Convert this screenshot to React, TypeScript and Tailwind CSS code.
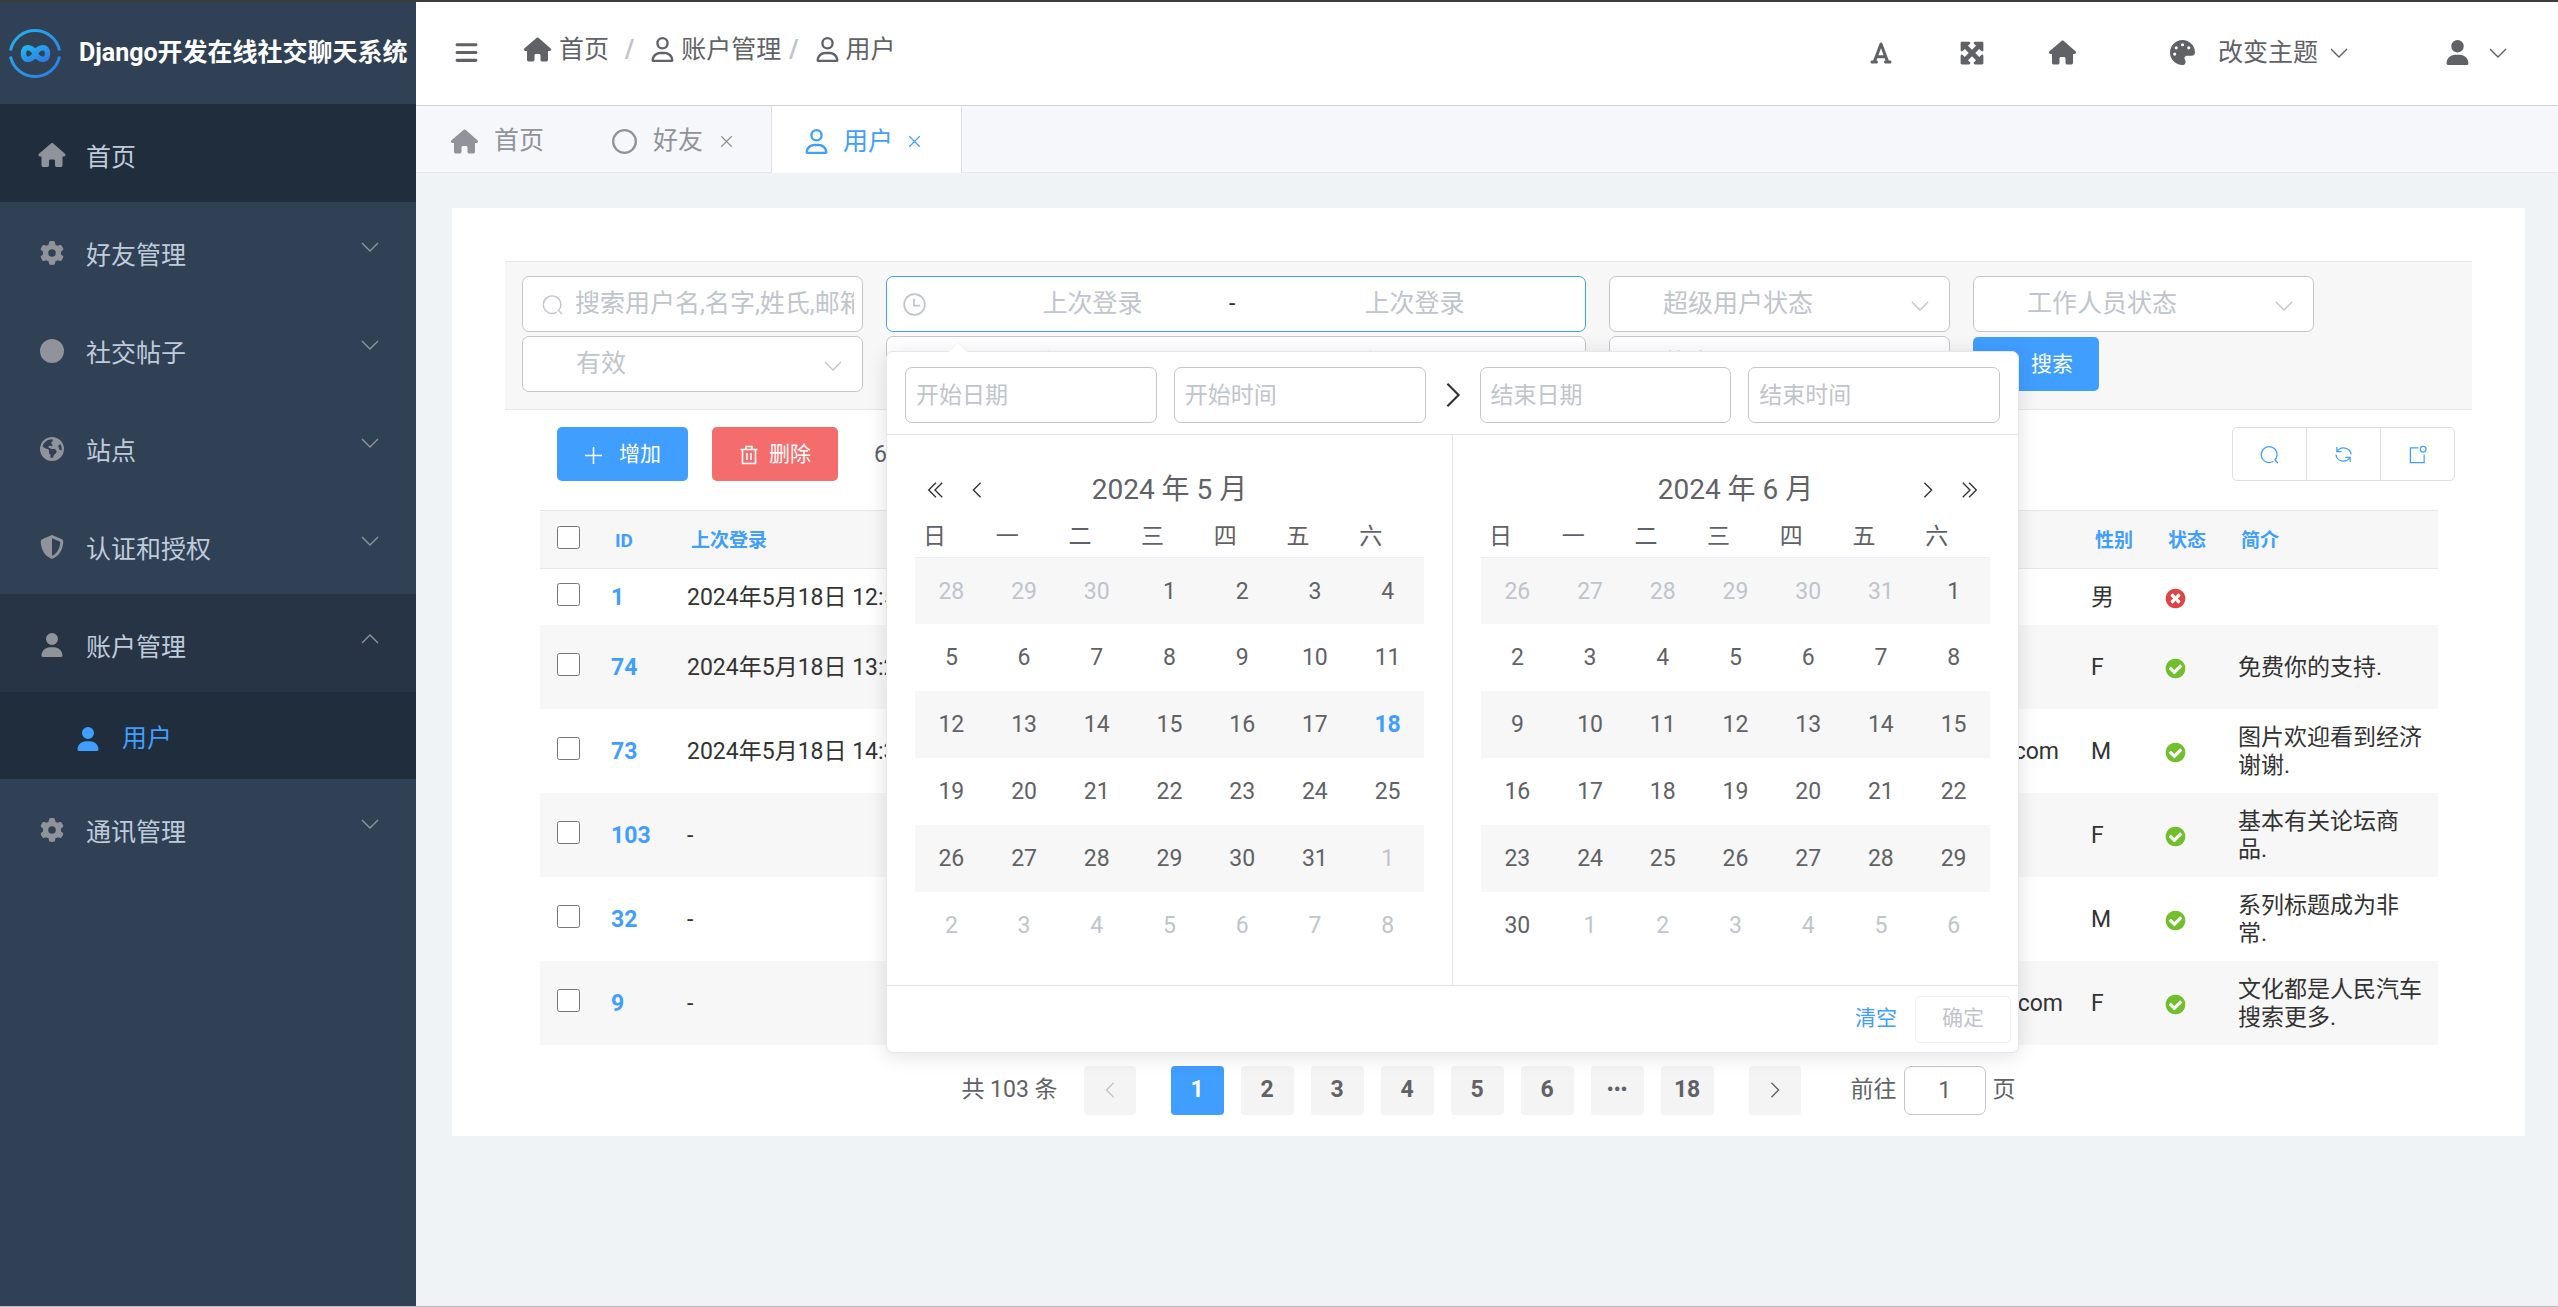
import React, { useState } from "react";
import { clsx } from "clsx";
import {
  FaBars,
  FaCircle,
  FaEarthAmericas,
  FaFont,
  FaGear,
  FaHouse,
  FaMaximize,
  FaPalette,
  FaRegCircle,
  FaRegUser,
  FaShieldHalved,
  FaUser,
} from "react-icons/fa6";

type IconProps = { className?: string };

const LineIcon: React.FC<IconProps & { d: string; box?: string; width?: number }> = ({ d, className, box = "0 0 20 20", width = 1 }) => (
  <svg viewBox={box} fill="none" stroke="currentColor" strokeWidth={width} className={clsx("shrink-0", className)} aria-hidden="true">
    <path d={d} />
  </svg>
);

const ArrowDown = ({ className }: IconProps) => <LineIcon d="M2 6l8 8 8-8" width={1.4} className={className} />;
const ArrowUp = ({ className }: IconProps) => <LineIcon d="M2 14l8-8 8 8" width={1.4} className={className} />;
const ArrowLeft = ({ className }: IconProps) => <LineIcon d="M14 2l-8 8 8 8" width={1.5} className={className} />;
const ArrowRight = ({ className }: IconProps) => <LineIcon d="M6 2l8 8-8 8" width={1.5} className={className} />;
const DoubleLeft = ({ className }: IconProps) => <LineIcon d="M11 2l-8 8 8 8M18 2l-8 8 8 8" width={1.5} className={className} />;
const DoubleRight = ({ className }: IconProps) => <LineIcon d="M2 2l8 8-8 8M9 2l8 8-8 8" width={1.5} className={className} />;
const CloseIcon = ({ className }: IconProps) => <LineIcon d="M3 3l14 14M17 3L3 17" width={1.6} className={className} />;
const PlusIcon = ({ className }: IconProps) => <LineIcon d="M10 1v18M1 10h18" width={1.6} className={className} />;
const SearchIcon = ({ className }: IconProps) => (
  <LineIcon d="M15.5 16a8.3 8.3 0 1 0-1.5 1.2M15.2 15.3L19 19" width={1.3} className={className} />
);
const ClockIcon = ({ className }: IconProps) => <LineIcon d="M10 1a9 9 0 1 0 0 18a9 9 0 0 0 0-18M9.5 5v6h5.5" width={1.5} className={className} />;
const TrashIcon = ({ className }: IconProps) => (
  <LineIcon d="M1.5 4.5h17M7 4.5v-3h6v3M3.5 4.5v14h13v-14M8 8v7M12 8v7" width={1.6} className={className} />
);
const RefreshIcon = ({ className }: IconProps) => (
  <LineIcon d="M3 2v5h5M3.3 6.8A8 8 0 0 1 18 10M17 18v-5h-5M16.700 13.200A8 8 0 0 1 2 10" width={1.3} className={className} />
);
const ExportIcon = ({ className }: IconProps) => (
  <LineIcon d="M11 3H2.500v15.500H17V10M16 1.500a3 3 0 1 0 0 6a3 3 0 0 0 0-6" width={1.3} className={className} />
);

const Logo = () => (
  <svg viewBox="0 0 54 54" className="size-[54px] shrink-0" fill="none" stroke="url(#logoBlue)" aria-hidden="true">
    <defs>
      <linearGradient id="logoBlue" x1="0" y1="0" x2="1" y2="1">
        <stop offset="0" stopColor="#20b4f0" />
        <stop offset="1" stopColor="#2e7be4" />
      </linearGradient>
    </defs>
    <path d="M2.500 24.500A25 25 0 0 1 51.500 24.500M2.500 30.500A25 25 0 0 0 51.500 30.500" strokeWidth="3" />
    <path
      d="M27.300 27.500C24 20.500 15.500 19 15.500 27.500C15.500 36 24 34.500 27.300 27.500C30.500 20.500 39.500 19 39.500 27.500C39.500 36 31 34.500 27.300 27.500Z"
      strokeWidth="5.500"
    />
  </svg>
);

const StatusIcon = ({ ok }: { ok: boolean }) => (
  <svg viewBox="0 0 1792 1792" className="size-[23px]" role="img" aria-label={ok ? "True" : "False"}>
    <path
      fill={ok ? "#70bf2b" : "#dd4646"}
      d={
        ok
          ? "M1412 734q0-28-18-46l-91-90q-19-19-45-19t-45 19l-408 407-226-226q-19-19-45-19t-45 19l-91 90q-18 18-18 46 0 27 18 45l362 362q19 19 45 19 27 0 46-19l543-543q18-18 18-45zm252 162q0 209-103 385.5t-279.5 279.5-385.5 103-385.5-103-279.5-279.5-103-385.5 103-385.5 279.5-279.5 385.5-103 385.5 103 279.5 279.5 103 385.5z"
          : "M1277 1122q0-26-19-45l-181-181 181-181q19-19 19-45 0-27-19-46l-90-90q-19-19-46-19-26 0-45 19l-181 181-181-181q-19-19-45-19-27 0-46 19l-90 90q-19 19-19 46 0 26 19 45l181 181-181 181q-19 19-19 45 0 27 19 46l90 90q19 19 46 19 26 0 45-19l181-181 181 181q19 19 45 19 27 0 46-19l90-90q19-19 19-46zm387-226q0 209-103 385.5t-279.5 279.5-385.5 103-385.5-103-279.5-279.5-103-385.5 103-385.5 279.5-279.5 385.5-103 385.5 103 279.5 279.5 103 385.5z"
      }
    />
  </svg>
);

const menus = [
  { name: "首页", icon: FaHouse, active: true },
  { name: "好友管理", icon: FaGear, arrow: true },
  { name: "社交帖子", icon: FaCircle, arrow: true },
  { name: "站点", icon: FaEarthAmericas, arrow: true },
  { name: "认证和授权", icon: FaShieldHalved, arrow: true },
  { name: "账户管理", icon: FaUser, arrow: true, open: true, children: ["用户"] },
  { name: "通讯管理", icon: FaGear, arrow: true },
];

const Sidebar = () => (
  <aside className="w-[416px] shrink-0 bg-[#304156]">
    <div className="flex h-[102px] items-center gap-[17px] pl-2 text-[25px] font-bold whitespace-nowrap text-white">
      <Logo />
      Django开发在线社交聊天系统
    </div>
    <nav>
      {menus.map((item) => (
        <div key={item.name}>
          <button
            className={clsx(
              "flex h-[98px] w-full items-center px-9 pt-1 text-left text-[25px] text-[#bfcbd9]",
              item.active && "bg-[#1f2d3d]",
              item.open && "bg-[#263445]"
            )}
          >
            <item.icon className="mr-[18px] w-8 text-[24px] text-[#909399]" />
            <span className="flex-1 pt-1.5">{item.name}</span>
            {item.arrow && (item.open ? <ArrowUp className="mb-3 size-5 text-[#909399]" /> : <ArrowDown className="mb-3 size-5 text-[#909399]" />)}
          </button>
          {item.children?.map((child) => (
            <button key={child} className="flex h-[87px] w-full items-center gap-[22px] bg-[#1f2d3d] px-[76px] pt-1.5 text-[25px] text-[#409eff]">
              <FaUser className="text-[24px]" />
              {child}
            </button>
          ))}
        </div>
      ))}
    </nav>
  </aside>
);

const Header = () => (
  <header className="flex h-[104px] items-center border-b border-[#ced4da] bg-white pr-[50px] pb-0.5 pl-[38px] text-[25px] text-[#606266]">
    <button aria-label="菜单">
      <FaBars className="text-[25px]" />
    </button>
    <nav className="mb-1.5 ml-[45px] flex items-center gap-2">
      <a href="#" className="flex items-center gap-2">
        <FaHouse className="text-[27px]" />
        首页
      </a>
      <span className="px-2 font-bold text-[#c0c4cc]">/</span>
      <a href="#" className="flex items-center gap-1.5">
        <FaRegUser className="text-[25px]" />
        账户管理
      </a>
      <span className="font-bold text-[#c0c4cc]">/</span>
      <a href="#" className="ml-2 flex items-center gap-1.5">
        <FaRegUser className="text-[25px]" />
        用户
      </a>
    </nav>
    <div className="ml-auto flex items-center">
      <button aria-label="字体" className="mr-[66px]">
        <FaFont className="text-[24px]" />
      </button>
      <button aria-label="全屏" className="mr-[64px]">
        <FaMaximize className="text-[26px]" />
      </button>
      <button aria-label="首页" className="mr-[94px]">
        <FaHouse className="text-[27px]" />
      </button>
      <button className="mr-[96px] flex items-center">
        <FaPalette className="mr-[23px] text-[25px]" />
        改变主题
        <ArrowDown className="ml-[11px] size-5" />
      </button>
      <button aria-label="用户" className="flex items-center gap-[18px]">
        <FaUser className="text-[25px]" />
        <ArrowDown className="size-5" />
      </button>
    </div>
  </header>
);

const Tabs = () => (
  <div className="flex h-[67px] border-b border-[#e4e7ed] bg-[#f5f7fa] text-[25px] text-[#909399]">
    <button className="flex items-center gap-4 px-[35px] pt-1">
      <FaHouse className="text-[27px]" />
      首页
    </button>
    <button className="flex items-center gap-4 pt-1 pr-[37px] pl-[33px]">
      <FaRegCircle className="text-[25px]" />
      好友
      <CloseIcon className="size-[15px]" />
    </button>
    <button className="-mb-px flex items-center gap-[14px] border-x border-[#dcdfe6] bg-white pt-1 pr-[39px] pl-8 text-[#409eff]">
      <FaRegUser className="text-[25px]" />
      用户
      <CloseIcon className="size-[15px]" />
    </button>
  </div>
);

const FilterSelect = ({ label }: { label: string }) => (
  <div className="relative h-14 w-[341px]">
    <select aria-label={label} className="h-full w-full appearance-none rounded-[7px] border border-[#c4c6ca] bg-white pl-[53px] text-[25px] text-[#c0c4cc] outline-none">
      <option>{label}</option>
    </select>
    <ArrowDown className="pointer-events-none absolute top-5 right-5 size-5 text-[#c0c4cc]" />
  </div>
);

const DateRange: React.FC<{ label: string; focused?: boolean; children?: React.ReactNode }> = ({ label, focused, children }) => (
  <div className={clsx("relative flex h-14 w-[700px] items-center rounded-[7px] border bg-white", focused ? "z-10 border-[#409eff]" : "border-[#c4c6ca]")}>
    <ClockIcon className="mr-[30px] ml-4 size-[23px] text-[#c0c4cc]" />
    <input aria-label={label + "开始"} placeholder={label} className="w-[273px] text-center text-[25px] outline-none placeholder:text-[#c0c4cc]" />
    <span className="w-[49px] text-[23px] text-[#303133]">-</span>
    <input aria-label={label + "结束"} placeholder={label} className="w-[273px] text-center text-[25px] outline-none placeholder:text-[#c0c4cc]" />
    {children}
  </div>
);

const weekDays = ["日", "一", "二", "三", "四", "五", "六"];

// always 6 weeks, padded with the days of the neighbour months
const buildWeeks = (year: number, month: number) => {
  let offset = new Date(year, month - 1, 1).getDay();
  if (offset === 0) offset = 7;
  return Array.from({ length: 6 }, (_, w) =>
    weekDays.map((_, d) => {
      const date = new Date(year, month - 1, 1 - offset + w * 7 + d);
      return { day: date.getDate(), current: date.getMonth() === month - 1 };
    })
  );
};

const Calendar = ({ year, month, side, today }: { year: number; month: number; side: "left" | "right"; today?: number }) => (
  <div className={clsx("flex-1 px-7 pt-7 pb-[26px]", side === "left" && "border-r border-[#e4e4e4]")}>
    <div className="grid h-[54px] grid-cols-[80px_1fr_80px] items-center px-[11px] text-[#303133]">
      <div className="flex gap-6">
        {side === "left" && (
          <>
            <button aria-label="前一年">
              <DoubleLeft className="size-[18px]" />
            </button>
            <button aria-label="上个月">
              <ArrowLeft className="size-[18px]" />
            </button>
          </>
        )}
      </div>
      <div className="text-center text-[28px] text-[#606266]">
        {year} 年 {month} 月
      </div>
      <div className="flex justify-end gap-6">
        {side === "right" && (
          <>
            <button aria-label="下个月">
              <ArrowRight className="size-[18px]" />
            </button>
            <button aria-label="后一年">
              <DoubleRight className="size-[18px]" />
            </button>
          </>
        )}
      </div>
    </div>
    <table className="w-full table-fixed text-[23px] text-[#606266]">
      <thead>
        <tr className="h-10 border-b border-[#ebeef5]">
          {weekDays.map((d) => (
            <th key={d} className="pl-2 text-left font-normal">
              {d}
            </th>
          ))}
        </tr>
      </thead>
      <tbody>
        {buildWeeks(year, month).map((week, i) => (
          <tr key={i} className="h-[67px] odd:bg-[#f7f7f7]">
            {week.map((d, j) => (
              <td key={j} className="pt-0.5 text-center">
                <button className={clsx(!d.current && "text-[#c0c4cc]", d.current && d.day === today && "font-bold text-[#409eff]")}>{d.day}</button>
              </td>
            ))}
          </tr>
        ))}
      </tbody>
    </table>
  </div>
);

const PickerInput = ({ label }: { label: string }) => (
  <input
    aria-label={label}
    placeholder={label}
    className="h-14 w-0 flex-1 rounded-[7px] border border-[#c4c6ca] px-[10px] text-[23px] outline-none placeholder:text-[#c0c4cc]"
  />
);

const DatePanel = () => (
  <div className="absolute top-[74px] -left-px z-20 w-[1133px] rounded-[7px] border border-[#e4e7ed] bg-white shadow-[0_3px_20px_rgba(0,0,0,0.12)]">
    <svg viewBox="0 0 20 10" className="absolute -top-[10px] left-[61px] h-[11px] w-5" aria-hidden="true">
      <path d="M0 10L10 0L20 10" fill="#fff" stroke="#ebeef5" />
    </svg>
    <div className="flex items-center gap-[17px] border-b border-[#e4e4e4] px-[18px] pt-[15px] pb-[11px]">
      <PickerInput label="开始日期" />
      <PickerInput label="开始时间" />
      <ArrowRight className="-mx-1 size-7 text-[#303133]" />
      <PickerInput label="结束日期" />
      <PickerInput label="结束时间" />
    </div>
    <div className="flex">
      <Calendar year={2024} month={5} side="left" today={18} />
      <Calendar year={2024} month={6} side="right" />
    </div>
    <div className="flex h-[67px] items-center justify-end gap-[18px] border-t border-[#e4e4e4] pr-[7px] text-[21px]">
      <button className="text-[#409eff]">清空</button>
      <button disabled className="h-[47px] w-24 rounded-[5px] border border-[#ebeef5] text-[#c0c4cc]">
        确定
      </button>
    </div>
  </div>
);

const FilterBar = () => (
  <form className="mx-[53px] flex flex-wrap gap-x-[23px] gap-y-1 border-y border-[#e6e6e6] bg-[#f7f7f7] px-[17px] pt-[14px] pb-[17px]">
    <div className="flex h-14 w-[341px] items-center rounded-[7px] border border-[#c4c6ca] bg-white px-[19px] pr-2">
      <SearchIcon className="mr-3 size-[21px] text-[#c0c4cc]" />
      <input aria-label="搜索" placeholder="搜索用户名,名字,姓氏,邮箱" className="w-0 flex-1 text-[25px] outline-none placeholder:text-[#c0c4cc]" />
    </div>
    <DateRange label="上次登录" focused>
      <DatePanel />
    </DateRange>
    <FilterSelect label="超级用户状态" />
    <FilterSelect label="工作人员状态" />
    <FilterSelect label="有效" />
    <DateRange label="加入日期" />
    <FilterSelect label="状态" />
    <button type="button" className="mt-px flex h-[54px] items-center gap-3 rounded-[5px] bg-[#409eff] px-[26px] pt-0.5 text-[21px] text-white">
      <SearchIcon className="size-5" />
      搜索
    </button>
  </form>
);

const Toolbar = () => (
  <div className="flex items-center pt-[17px] pr-[70px] pb-[29px] pl-[105px] text-[21px] text-white">
    <button className="mr-6 flex h-[54px] items-center gap-4 rounded-[5px] bg-[#409eff] px-[27px] pt-0.5">
      <PlusIcon className="size-[19px]" />
      增加
    </button>
    <button className="mr-9 flex h-[54px] items-center gap-[10px] rounded-[5px] bg-[#f56c6c] px-[27px] pt-0.5">
      <TrashIcon className="size-5" />
      删除
    </button>
    <span className="pt-0.5 text-[23px] text-[#606266]">6</span>
    <div className="ml-auto flex h-[54px] divide-x divide-[#dcdfe6] rounded-[5px] border border-[#dcdfe6] text-[#409eff]">
      <button aria-label="搜索" className="px-[27px]">
        <SearchIcon className="size-[19px]" />
      </button>
      <button aria-label="刷新" className="px-[27px]">
        <RefreshIcon className="size-[19px]" />
      </button>
      <button aria-label="导出" className="px-[27px]">
        <ExportIcon className="size-[19px]" />
      </button>
    </div>
  </div>
);

const users = [
  { id: 1, login: "2024年5月18日 12:5", email: "", gender: "男", ok: false, intro: "", height: "h-14" },
  { id: 74, login: "2024年5月18日 13:2", email: "", gender: "F", ok: true, intro: "免费你的支持." },
  { id: 73, login: "2024年5月18日 14:3", email: ".com", gender: "M", ok: true, intro: "图片欢迎看到经济谢谢.", pad: "pr-5" },
  { id: 103, login: "-", email: "", gender: "F", ok: true, intro: "基本有关论坛商品." },
  { id: 32, login: "-", email: "", gender: "M", ok: true, intro: "系列标题成为非常." },
  { id: 9, login: "-", email: ".com", gender: "F", ok: true, intro: "文化都是人民汽车搜索更多.", pad: "pr-4" },
];

const UserTable = () => {
  const [checked, setChecked] = useState<number[]>([]);

  const toggle = (id: number) => setChecked((prev) => (prev.includes(id) ? prev.filter((c) => c !== id) : [...prev, id]));

  const toggleAll = () => setChecked((prev) => (prev.length === users.length ? [] : users.map((u) => u.id)));

  return (
    <div className="pr-[87px] pl-[88px]">
      <table className="w-full table-fixed text-[23px] leading-7 text-[#333]">
        <colgroup>
          <col className="w-[59px]" />
          <col className="w-[76px]" />
          <col className="w-[320px]" />
          <col />
          <col className="w-[73px]" />
          <col className="w-[73px]" />
          <col className="w-[213px]" />
        </colgroup>
        <thead>
          <tr className="h-[58px] border-y border-[#e6e6e6] bg-[#f7f7f7] text-left text-[19px] text-[#409eff]">
            <th className="pl-[17px]">
              <input type="checkbox" aria-label="全选" className="mb-1 block size-[23px]" checked={checked.length === users.length} onChange={toggleAll} />
            </th>
            <th className="pt-0.5 pl-4">ID</th>
            <th className="pt-0.5 pl-4">上次登录</th>
            <th></th>
            <th className="pt-0.5 pl-4">性别</th>
            <th className="pt-0.5 pl-4">状态</th>
            <th className="pt-0.5 pl-4">简介</th>
          </tr>
        </thead>
        <tbody>
          {users.map((user) => (
            <tr key={user.id} className={clsx("even:bg-[#f7f7f7]", user.height || "h-[84px]")}>
              <td className="pl-[17px]">
                <input type="checkbox" aria-label={"选择 " + user.id} className="mb-1 block size-[23px]" checked={checked.includes(user.id)} onChange={() => toggle(user.id)} />
              </td>
              <td className="pt-0.5 pl-3 font-bold">
                <a href="#" className="text-[#409eff]">
                  {user.id}
                </a>
              </td>
              <td className="pt-0.5 pl-3 whitespace-nowrap">{user.login}</td>
              <td className={clsx("pt-0.5 text-right", user.pad)}>{user.email}</td>
              <td className="pt-0.5 pl-3">{user.gender}</td>
              <td className="pt-1 pl-3">
                <StatusIcon ok={user.ok} />
              </td>
              <td className="pt-0.5 pr-3 pl-[13px]">{user.intro}</td>
            </tr>
          ))}
        </tbody>
      </table>
    </div>
  );
};

const pages = ["1", "2", "3", "4", "5", "6", "•••", "18"];

const Pagination = () => {
  const [current, setCurrent] = useState("1");

  return (
    <div className="flex items-center justify-center pt-[21px] pb-[21px] text-[23px] text-[#606266]">
      <span className="mr-[26px]">共 103 条</span>
      <button aria-label="上一页" disabled className="mr-[35px] flex h-[49px] w-[52px] items-center justify-center rounded-[4px] bg-[#f4f4f5] text-[#c0c4cc]">
        <ArrowLeft className="size-[18px]" />
      </button>
      <div className="flex gap-[17px]">
        {pages.map((p) => (
          <button
            key={p}
            onClick={() => setCurrent(p)}
            className={clsx(
              "h-[49px] w-[53px] rounded-[4px] font-bold",
              p === current ? "bg-[#409eff] text-white" : "bg-[#f4f4f5]",
              p === "•••" && "text-[19px]"
            )}
          >
            {p}
          </button>
        ))}
      </div>
      <button aria-label="下一页" className="mr-[50px] ml-[35px] flex h-[49px] w-[52px] items-center justify-center rounded-[4px] bg-[#f4f4f5]">
        <ArrowRight className="size-[18px]" />
      </button>
      <label className="flex items-center gap-[7px]">
        前往
        <input defaultValue="1" className="h-[49px] w-[82px] rounded-[7px] border border-[#c4c6ca] text-center outline-none" />
        页
      </label>
    </div>
  );
};

const App: React.FC = () => {
  return (
    <div className="flex min-h-screen border-t-2 border-b border-t-[#3c3c3c] border-b-[#b9bbbe] bg-[#eff3f6] font-['Roboto','Noto_Sans_CJK_SC',sans-serif]">
      <Sidebar />
      <div className="min-w-0 flex-1">
        <Header />
        <Tabs />
        <main className="mt-[35px] mr-[33px] ml-9 bg-white pt-[53px]">
          <FilterBar />
          <Toolbar />
          <UserTable />
          <Pagination />
        </main>
      </div>
    </div>
  );
};

export default App;
